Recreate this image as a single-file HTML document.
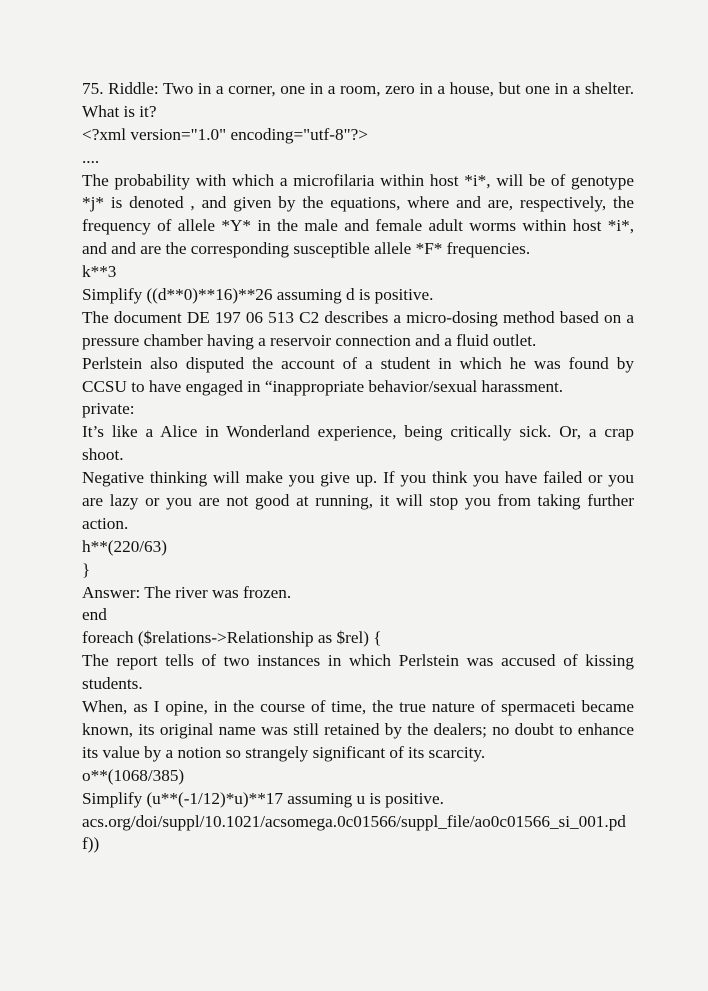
<!DOCTYPE html>
<html><head><meta charset="utf-8"><style>
html,body{margin:0;padding:0;}
body{width:708px;height:991px;background:#f3f3f1;overflow:hidden;position:relative;}
.t{position:absolute;left:82px;top:78px;width:552px;font-family:"Liberation Serif",serif;font-size:17.2px;line-height:22.9px;color:#111;}
.t div{white-space:nowrap;height:22.9px;}
.t .j{text-align:justify;text-align-last:justify;white-space:normal;}
</style></head><body><div class="t">
<div class="j">75. Riddle: Two in a corner, one in a room, zero in a house, but one in a shelter.</div>
<div>What is it?</div>
<div>&lt;?xml version="1.0" encoding="utf-8"?&gt;</div>
<div>....</div>
<div class="j">The probability with which a microfilaria within host *i*, will be of genotype</div>
<div class="j">*j* is denoted , and given by the equations, where and are, respectively, the</div>
<div class="j">frequency of allele *Y* in the male and female adult worms within host *i*,</div>
<div>and and are the corresponding susceptible allele *F* frequencies.</div>
<div>k**3</div>
<div>Simplify ((d**0)**16)**26 assuming d is positive.</div>
<div class="j">The document DE 197 06 513 C2 describes a micro-dosing method based on a</div>
<div>pressure chamber having a reservoir connection and a fluid outlet.</div>
<div class="j">Perlstein also disputed the account of a student in which he was found by</div>
<div>CCSU to have engaged in “inappropriate behavior/sexual harassment.</div>
<div>private:</div>
<div class="j">It’s like a Alice in Wonderland experience, being critically sick. Or, a crap</div>
<div>shoot.</div>
<div class="j">Negative thinking will make you give up. If you think you have failed or you</div>
<div class="j">are lazy or you are not good at running, it will stop you from taking further</div>
<div>action.</div>
<div>h**(220/63)</div>
<div>}</div>
<div>Answer: The river was frozen.</div>
<div>end</div>
<div>foreach ($relations-&gt;Relationship as $rel) {</div>
<div class="j">The report tells of two instances in which Perlstein was accused of kissing</div>
<div>students.</div>
<div class="j">When, as I opine, in the course of time, the true nature of spermaceti became</div>
<div class="j">known, its original name was still retained by the dealers; no doubt to enhance</div>
<div>its value by a notion so strangely significant of its scarcity.</div>
<div>o**(1068/385)</div>
<div>Simplify (u**(-1/12)*u)**17 assuming u is positive.</div>
<div>acs.org/doi/suppl/10.1021/acsomega.0c01566/suppl_file/ao0c01566_si_001.pd</div>
<div>f))</div>
</div></body></html>
